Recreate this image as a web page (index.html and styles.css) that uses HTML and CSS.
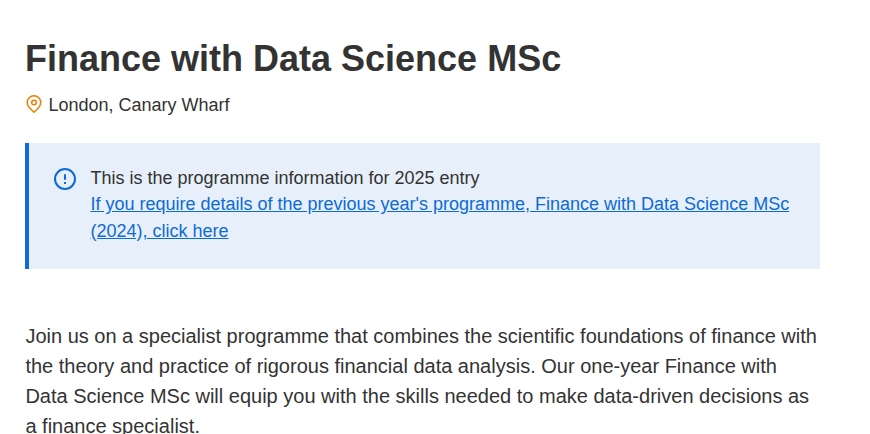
FILE: index.html
```html
<!DOCTYPE html>
<html lang="en">
<head>
    <meta charset="UTF-8">
    <meta name="viewport" content="width=device-width, initial-scale=1.0">
    <title>Finance with Data Science MSc</title>
    <link rel="stylesheet" href="styles.css">
</head>
<body>
    <main class="programme">
        <h1 class="title">Finance with Data Science MSc</h1>

        <div class="location">
            <svg class="pin" viewBox="0 0 16 18" fill="none" stroke="#f07d00" stroke-width="1.5">
                <path d="M8 17.2 C6 15.2 1.2 11.8 1.2 7.4 A6.8 6.6 0 0 1 14.8 7.4 C14.8 11.8 10 15.2 8 17.2 Z" stroke-linejoin="round"/>
                <circle cx="8" cy="7.5" r="2.3"/>
            </svg>
            <span>London, Canary Wharf</span>
        </div>

        <!-- entry year notice -->
        <div class="notice">
            <svg class="notice-icon" viewBox="0 0 22 22" fill="none" stroke="#0c6bd6" stroke-width="2">
                <circle cx="11" cy="11" r="10"/>
                <path d="M11 6.2 V11.8 M11 14 V16"/>
            </svg>
            <div class="notice-text">
                <p>This is the programme information for 2025 entry</p>
                <a href="#">If you require details of the previous year's programme, Finance with Data Science MSc (2024), click here</a>
            </div>
        </div>

        <p class="intro">Join us on a specialist programme that combines the scientific foundations of finance with the theory and practice of rigorous financial data analysis. Our one-year Finance with Data Science MSc will equip you with the skills needed to make data-driven decisions as a finance specialist.</p>
    </main>
</body>
</html>
```
FILE: styles.css
```css
*{
    margin: 0px;
    padding: 0px;
    box-sizing: border-box;
}
body{
    font-family: "Liberation Sans", Arial, sans-serif;
    color: #333;
    background: #fff;
    height: 434px;
    overflow: hidden;
}
.programme{
    width: 820px;
    padding: 36px 0 0 25px;
}
.title{
    font-size: 36px;
    line-height: 46px;
    font-weight: bold;
}
.location{
    display: flex;
    gap: 6.4px;
    margin-top: 10px;
    padding-left: 1px;
    font-size: 18px;
    line-height: 27px;
}
.pin{
    width: 16px;
    height: 18px;
    margin-top: 3px;
}
.notice{
    display: flex;
    gap: 14.4px;
    height: 126px;
    margin-top: 24px;
    padding: 22px 20px 0 25px;
    background: #e7effa;
    border-left: 4px solid #0c6bd6;
    font-size: 18px;
    line-height: 26.4px;
}
.notice-icon{
    flex-shrink: 0;
    width: 22px;
    height: 22px;
    margin-top: 3px;
}
.notice-text a{
    color: #0c6bd6;
}
.intro{
    margin-top: 52px;
    padding-left: 0.4px;
    font-size: 20px;
    line-height: 30px;
}
```
